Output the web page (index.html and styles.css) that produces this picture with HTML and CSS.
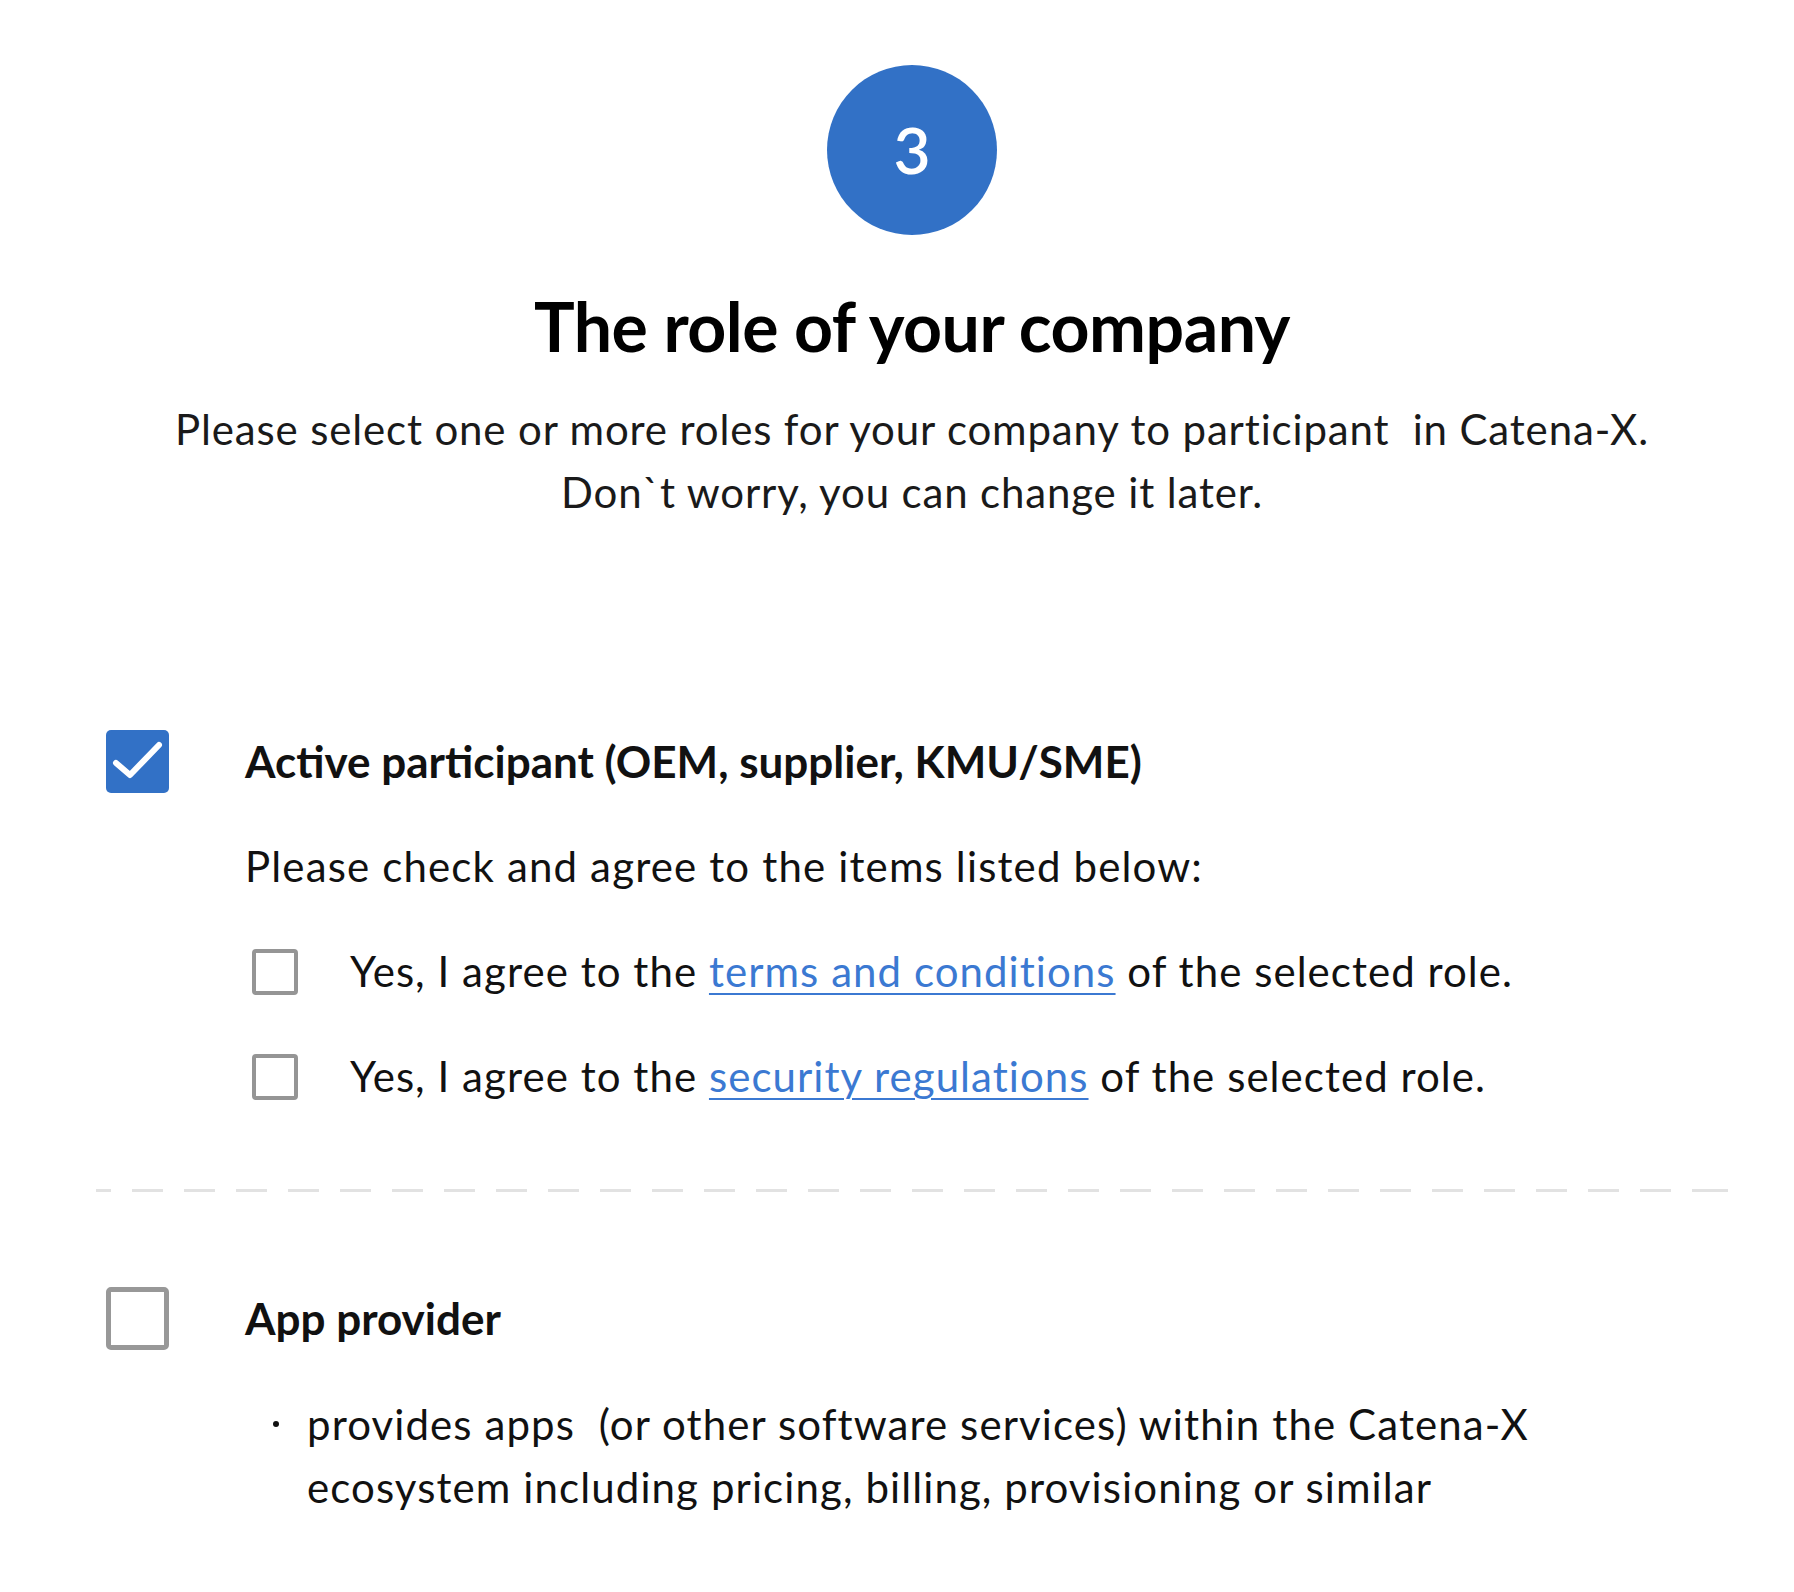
FILE: index.html
```html
<!DOCTYPE html>
<html lang="en">
<head>
<meta charset="utf-8">
<title>The role of your company</title>
<link rel="stylesheet" href="styles.css">
</head>
<body>
<main class="page">
  <header class="intro">
    <div class="step">3</div>
    <h1 class="title">The role of your company</h1>
    <p class="subtitle">Please select one or more roles for your company to participant &nbsp;in Catena-X.<br>Don`t worry, you can change it later.</p>
  </header>

  <section class="role">
    <div class="role-head">
      <span class="box box-lg box-checked">
        <svg viewBox="0 0 63 63" width="63" height="63"><path d="M10 33 L24 45 L53 15" fill="none" stroke="#fff" stroke-width="6" stroke-linecap="round" stroke-linejoin="round"/></svg>
      </span>
      <span class="role-name">Active participant (OEM, supplier, KMU/SME)</span>
    </div>
    <div class="role-body">
      <p class="hint">Please check and agree to the items listed below:</p>
      <div class="agree">
        <span class="box box-sm"></span>
        <span class="agree-text">Yes, I agree to the <a href="#">terms and conditions</a> of the selected role.</span>
      </div>
      <div class="agree">
        <span class="box box-sm"></span>
        <span class="agree-text">Yes, I agree to the <a href="#">security regulations</a> of the selected role.</span>
      </div>
    </div>
  </section>

  <hr class="divider">

  <section class="role">
    <div class="role-head">
      <span class="box box-lg"></span>
      <span class="role-name">App provider</span>
    </div>
    <ul class="bullets">
      <li>provides apps &nbsp;(or other software services) within the Catena-X ecosystem including pricing, billing, provisioning or similar</li>
    </ul>
  </section>
</main>
</body>
</html>
```

FILE: styles.css
```css
html, body {
  margin: 0;
  padding: 0;
  background: #ffffff;
}

body {
  font-family: Lato, "Open Sans", "Liberation Sans", sans-serif;
  color: #111111;
}

.page {
  width: 1632px;
  margin-left: 96px;
  padding-top: 65px;
  padding-bottom: 60px;
}

.intro {
  display: flex;
  flex-direction: column;
  align-items: center;
}

.step {
  width: 170px;
  height: 170px;
  border-radius: 50%;
  background: #3271c6;
  color: #ffffff;
  font-size: 64px;
  font-weight: 600;
  display: flex;
  align-items: center;
  justify-content: center;
  line-height: 1;
}

.title {
  margin: 51px 0 0;
  font-size: 68px;
  line-height: 80px;
  font-weight: 700;
  color: #000000;
  letter-spacing: -0.5px;
}

.subtitle {
  margin: 32px 0 0;
  font-size: 42px;
  line-height: 63px;
  text-align: center;
  color: #1a1a1a;
  letter-spacing: 0.85px;
}

.role {
  margin-top: 206px;
}

.role + .divider + .role {
  margin-top: 95px;
}

.role-head {
  display: flex;
  align-items: center;
  padding-left: 10px;
  gap: 76px;
}

.role-name {
  font-size: 44px;
  line-height: 63px;
  font-weight: 700;
  letter-spacing: 0;
}

.box {
  flex: none;
  box-sizing: border-box;
  display: block;
}

.box-lg {
  width: 63px;
  height: 63px;
  border: 5px solid #989898;
  border-radius: 5px;
}

.box-checked {
  border: none;
  background: #3271c6;
}

.box-checked svg {
  display: block;
}

.box-sm {
  width: 46px;
  height: 46px;
  border: 4px solid #959595;
  border-radius: 4px;
}

.role-body {
  padding-left: 149px;
}

.hint {
  margin: 42px 0 0;
  font-size: 42px;
  line-height: 63px;
  letter-spacing: 1.15px;
}

.agree {
  display: flex;
  align-items: center;
  gap: 52px;
  margin-top: 42px;
  padding-left: 7px;
}

.agree-text {
  font-size: 42px;
  line-height: 63px;
  letter-spacing: 1.05px;
}

.agree-text a {
  color: #3b79d2;
  text-decoration: underline;
  text-decoration-thickness: 2px;
  text-underline-offset: 6px;
}

.divider {
  margin: 81px 0 0;
  border: none;
  height: 3px;
  background: repeating-linear-gradient(to right, #e2e2e2 0 31px, transparent 31px 52px);
  background-position: -16px 0;
}

.bullets {
  list-style: none;
  margin: 43px 0 0;
  padding-left: 211px;
  font-size: 42px;
  line-height: 63px;
  letter-spacing: 1.1px;
  width: 1260px;
}

.bullets li {
  position: relative;
}

.bullets li::before {
  content: "";
  position: absolute;
  left: -34px;
  top: 28px;
  width: 6px;
  height: 6px;
  border-radius: 50%;
  background: #111111;
}
```
